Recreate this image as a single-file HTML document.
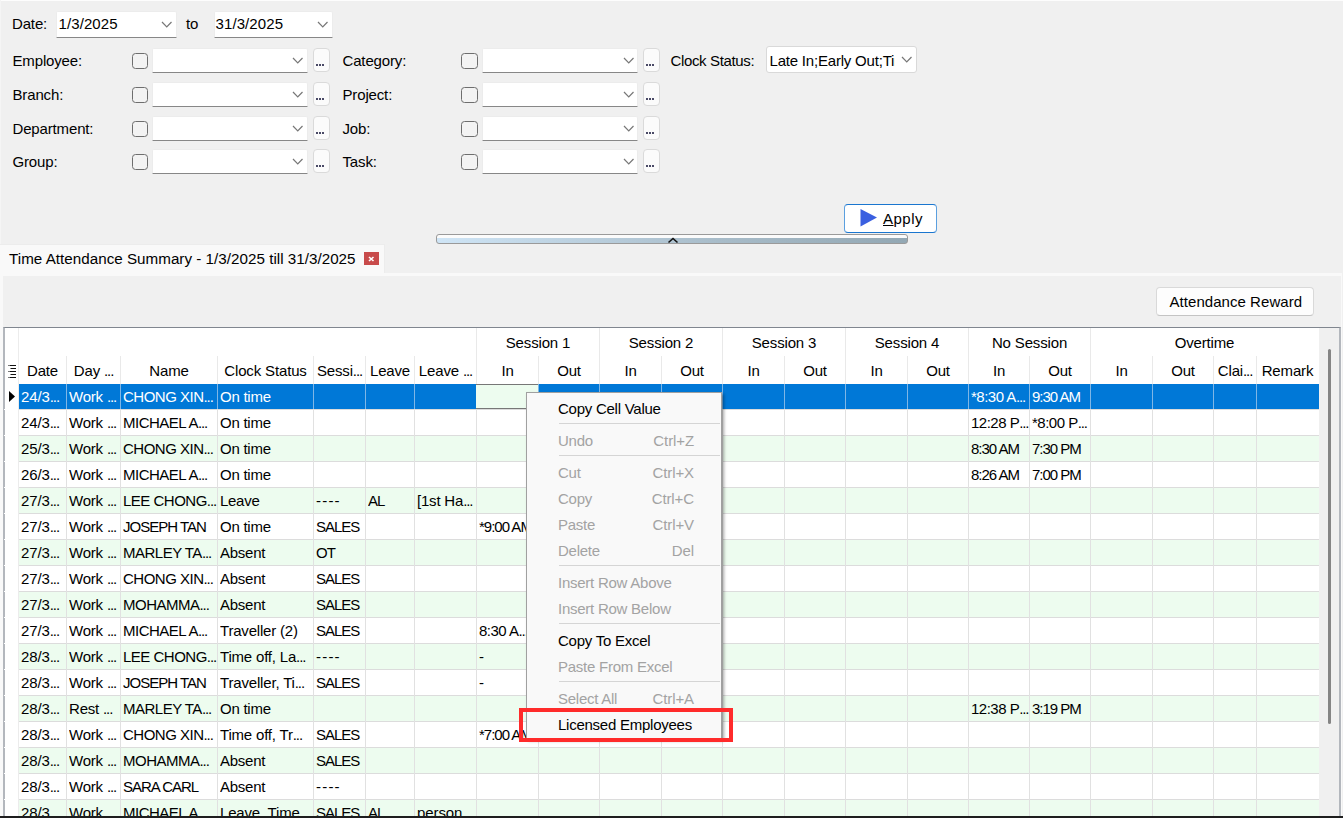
<!DOCTYPE html><html><head><meta charset="utf-8"><style>
*{box-sizing:border-box;margin:0;padding:0}
html,body{width:1343px;height:818px;overflow:hidden;background:#f0f0f0;font-family:"Liberation Sans",sans-serif;font-size:14.5px;color:#000}
.a{position:absolute}
.t{position:absolute;white-space:nowrap;line-height:1}
.cb{position:absolute;width:16.5px;height:16.5px;border:1.3px solid #6e6e6e;border-radius:3.5px;background:#f3f3f3}
.combo{position:absolute;background:#fff;border:1px solid #ececec;border-bottom:1px solid #878787;border-radius:2px 2px 0 0}
.ell{position:absolute;background:#fbfbfb;border:1.3px solid #dadada;border-radius:4px}
.chev{position:absolute}
.g{position:absolute;overflow:hidden;white-space:nowrap;line-height:1}
</style></head><body>
<div class="a" style="left:0;top:0;width:1343px;height:1px;background:#fdfdfd"></div>
<div class="a" style="left:0;top:0;width:1px;height:245px;background:#f5f5f5"></div>
<div class="t" style="left:12px;top:16.30px;font-size:15px;letter-spacing:-0.15px;color:#000;">Date:</div>
<div class="combo" style="left:56px;top:10.5px;width:120.5px;height:27.0px"></div>
<svg class="chev" style="left:160.75px;top:20.5px" width="11.5" height="7"><polyline points="1,1 5.75,6 10.5,1" fill="none" stroke="#777" stroke-width="1.2"/></svg>
<div class="t" style="left:58.5px;top:16.30px;font-size:15px;letter-spacing:0.1px;color:#000;">1/3/2025</div>
<div class="t" style="left:186px;top:16.30px;font-size:15px;letter-spacing:-0.15px;color:#000;">to</div>
<div class="combo" style="left:213.5px;top:10.5px;width:119.0px;height:27.0px"></div>
<svg class="chev" style="left:317.25px;top:20.5px" width="11.5" height="7"><polyline points="1,1 5.75,6 10.5,1" fill="none" stroke="#777" stroke-width="1.2"/></svg>
<div class="t" style="left:215.5px;top:16.30px;font-size:15px;letter-spacing:0.1px;color:#000;">31/3/2025</div>
<div class="t" style="left:12.5px;top:52.60px;font-size:15px;letter-spacing:-0.15px;color:#000;">Employee:</div>
<div class="cb" style="left:131.5px;top:52.5px"></div>
<div class="combo" style="left:152px;top:47.5px;width:155.5px;height:25.5px"></div>
<svg class="chev" style="left:292.25px;top:56.75px" width="11.5" height="7"><polyline points="1,1 5.75,6 10.5,1" fill="none" stroke="#777" stroke-width="1.2"/></svg>
<div class="ell" style="left:312.5px;top:48px;width:17.0px;height:23.5px"></div>
<div class="a" style="left:316.2px;top:64.0px;width:1.5px;height:1.5px;background:#4a4a66"></div>
<div class="a" style="left:319.2px;top:64.0px;width:1.5px;height:1.5px;background:#4a4a66"></div>
<div class="a" style="left:322.2px;top:64.0px;width:1.5px;height:1.5px;background:#4a4a66"></div>
<div class="t" style="left:342.5px;top:52.60px;font-size:15px;letter-spacing:-0.15px;color:#000;">Category:</div>
<div class="cb" style="left:461px;top:52.5px"></div>
<div class="combo" style="left:482px;top:47.5px;width:156px;height:25.5px"></div>
<svg class="chev" style="left:622.75px;top:56.75px" width="11.5" height="7"><polyline points="1,1 5.75,6 10.5,1" fill="none" stroke="#777" stroke-width="1.2"/></svg>
<div class="ell" style="left:642.5px;top:48px;width:17.0px;height:23.5px"></div>
<div class="a" style="left:646.2px;top:64.0px;width:1.5px;height:1.5px;background:#4a4a66"></div>
<div class="a" style="left:649.2px;top:64.0px;width:1.5px;height:1.5px;background:#4a4a66"></div>
<div class="a" style="left:652.2px;top:64.0px;width:1.5px;height:1.5px;background:#4a4a66"></div>
<div class="t" style="left:12.5px;top:86.60px;font-size:15px;letter-spacing:-0.15px;color:#000;">Branch:</div>
<div class="cb" style="left:131.5px;top:86.5px"></div>
<div class="combo" style="left:152px;top:81.5px;width:155.5px;height:25.5px"></div>
<svg class="chev" style="left:292.25px;top:90.75px" width="11.5" height="7"><polyline points="1,1 5.75,6 10.5,1" fill="none" stroke="#777" stroke-width="1.2"/></svg>
<div class="ell" style="left:312.5px;top:82px;width:17.0px;height:23.5px"></div>
<div class="a" style="left:316.2px;top:98.0px;width:1.5px;height:1.5px;background:#4a4a66"></div>
<div class="a" style="left:319.2px;top:98.0px;width:1.5px;height:1.5px;background:#4a4a66"></div>
<div class="a" style="left:322.2px;top:98.0px;width:1.5px;height:1.5px;background:#4a4a66"></div>
<div class="t" style="left:342.5px;top:86.60px;font-size:15px;letter-spacing:-0.15px;color:#000;">Project:</div>
<div class="cb" style="left:461px;top:86.5px"></div>
<div class="combo" style="left:482px;top:81.5px;width:156px;height:25.5px"></div>
<svg class="chev" style="left:622.75px;top:90.75px" width="11.5" height="7"><polyline points="1,1 5.75,6 10.5,1" fill="none" stroke="#777" stroke-width="1.2"/></svg>
<div class="ell" style="left:642.5px;top:82px;width:17.0px;height:23.5px"></div>
<div class="a" style="left:646.2px;top:98.0px;width:1.5px;height:1.5px;background:#4a4a66"></div>
<div class="a" style="left:649.2px;top:98.0px;width:1.5px;height:1.5px;background:#4a4a66"></div>
<div class="a" style="left:652.2px;top:98.0px;width:1.5px;height:1.5px;background:#4a4a66"></div>
<div class="t" style="left:12.5px;top:120.60px;font-size:15px;letter-spacing:-0.15px;color:#000;">Department:</div>
<div class="cb" style="left:131.5px;top:120.5px"></div>
<div class="combo" style="left:152px;top:115.5px;width:155.5px;height:25.5px"></div>
<svg class="chev" style="left:292.25px;top:124.75px" width="11.5" height="7"><polyline points="1,1 5.75,6 10.5,1" fill="none" stroke="#777" stroke-width="1.2"/></svg>
<div class="ell" style="left:312.5px;top:116px;width:17.0px;height:23.5px"></div>
<div class="a" style="left:316.2px;top:132.0px;width:1.5px;height:1.5px;background:#4a4a66"></div>
<div class="a" style="left:319.2px;top:132.0px;width:1.5px;height:1.5px;background:#4a4a66"></div>
<div class="a" style="left:322.2px;top:132.0px;width:1.5px;height:1.5px;background:#4a4a66"></div>
<div class="t" style="left:342.5px;top:120.60px;font-size:15px;letter-spacing:-0.15px;color:#000;">Job:</div>
<div class="cb" style="left:461px;top:120.5px"></div>
<div class="combo" style="left:482px;top:115.5px;width:156px;height:25.5px"></div>
<svg class="chev" style="left:622.75px;top:124.75px" width="11.5" height="7"><polyline points="1,1 5.75,6 10.5,1" fill="none" stroke="#777" stroke-width="1.2"/></svg>
<div class="ell" style="left:642.5px;top:116px;width:17.0px;height:23.5px"></div>
<div class="a" style="left:646.2px;top:132.0px;width:1.5px;height:1.5px;background:#4a4a66"></div>
<div class="a" style="left:649.2px;top:132.0px;width:1.5px;height:1.5px;background:#4a4a66"></div>
<div class="a" style="left:652.2px;top:132.0px;width:1.5px;height:1.5px;background:#4a4a66"></div>
<div class="t" style="left:12.5px;top:153.60px;font-size:15px;letter-spacing:-0.15px;color:#000;">Group:</div>
<div class="cb" style="left:131.5px;top:153.5px"></div>
<div class="combo" style="left:152px;top:148.5px;width:155.5px;height:25.5px"></div>
<svg class="chev" style="left:292.25px;top:157.75px" width="11.5" height="7"><polyline points="1,1 5.75,6 10.5,1" fill="none" stroke="#777" stroke-width="1.2"/></svg>
<div class="ell" style="left:312.5px;top:149px;width:17.0px;height:23.5px"></div>
<div class="a" style="left:316.2px;top:165.0px;width:1.5px;height:1.5px;background:#4a4a66"></div>
<div class="a" style="left:319.2px;top:165.0px;width:1.5px;height:1.5px;background:#4a4a66"></div>
<div class="a" style="left:322.2px;top:165.0px;width:1.5px;height:1.5px;background:#4a4a66"></div>
<div class="t" style="left:342.5px;top:153.60px;font-size:15px;letter-spacing:-0.15px;color:#000;">Task:</div>
<div class="cb" style="left:461px;top:153.5px"></div>
<div class="combo" style="left:482px;top:148.5px;width:156px;height:25.5px"></div>
<svg class="chev" style="left:622.75px;top:157.75px" width="11.5" height="7"><polyline points="1,1 5.75,6 10.5,1" fill="none" stroke="#777" stroke-width="1.2"/></svg>
<div class="ell" style="left:642.5px;top:149px;width:17.0px;height:23.5px"></div>
<div class="a" style="left:646.2px;top:165.0px;width:1.5px;height:1.5px;background:#4a4a66"></div>
<div class="a" style="left:649.2px;top:165.0px;width:1.5px;height:1.5px;background:#4a4a66"></div>
<div class="a" style="left:652.2px;top:165.0px;width:1.5px;height:1.5px;background:#4a4a66"></div>
<div class="t" style="left:670.5px;top:52.50px;font-size:15px;letter-spacing:-0.35px;color:#000;">Clock Status:</div>
<div class="a" style="left:766px;top:45.5px;width:151px;height:27px;background:#fff;border:1px solid #d9d9d9;border-radius:3px"></div>
<div class="a" style="left:769.5px;top:46px;width:125px;height:25px;overflow:hidden">
<div class="t" style="left:0;top:6.50px;font-size:15px;letter-spacing:-0.2px">Late In;Early Out;Time off</div></div>
<svg class="chev" style="left:901.25px;top:55.5px" width="11.5" height="7"><polyline points="1,1 5.75,6 10.5,1" fill="none" stroke="#777" stroke-width="1.2"/></svg>
<div class="a" style="left:844px;top:204px;width:93px;height:29px;background:#fff;border:1.5px solid #1a76cf;border-left-color:#5b9fdf;border-right-color:#5b9fdf;border-radius:4px"></div>
<svg class="a" style="left:859px;top:208px" width="20" height="20"><polygon points="1.5,1 18,9.5 1.5,18.5" fill="#3a5fe0"/></svg>
<div class="t" style="left:883px;top:211.30px;font-size:15px;letter-spacing:0.5px;color:#000;"><u>A</u>pply</div>
<div class="a" style="left:436px;top:234px;width:472px;height:10px;border:1px solid #9a9a9a;border-radius:3px;background:linear-gradient(to bottom,#fbfbfb 0,#fbfbfb 40%,transparent 40%),linear-gradient(to right,#cfe5f6,#a8bcc9 60%,#93a8b4)"></div>
<svg class="a" style="left:667px;top:236.5px" width="12" height="7"><polyline points="1.5,5.5 6,1.5 10.5,5.5" fill="none" stroke="#111" stroke-width="1.6"/></svg>
<div class="a" style="left:0;top:244px;width:385px;height:31px;background:#f9f9f9;border-top:1px solid #ececec;border-right:1px solid #ececec"></div>
<div class="a" style="left:0;top:273px;width:1342px;height:545px;background:#f9f9f9"></div>
<div class="a" style="left:3px;top:276px;width:1338px;height:542px;background:#f0f0f0"></div>
<div class="t" style="left:9px;top:251.13px;font-size:15.2px;letter-spacing:0.02px;color:#000;">Time Attendance Summary - 1/3/2025 till 31/3/2025</div>
<div class="a" style="left:364px;top:251.5px;width:14.5px;height:13.5px;background:#c84b4b"></div>
<svg class="a" style="left:364px;top:251.5px" width="15" height="14"><path d="M5,5 L9.5,9 M9.5,5 L5,9" stroke="#fff" stroke-width="1.6"/></svg>
<div class="a" style="left:1156px;top:287px;width:158px;height:28.5px;background:#fdfdfd;border:1px solid #d9d9d9;border-bottom-color:#c4c4c4;border-radius:4px"></div>
<div class="t" style="left:1169.5px;top:294.30px;font-size:15px;letter-spacing:0.05px;color:#000;">Attendance Reward</div>
<div class="a" style="left:3px;top:327px;width:1338px;height:500px;border-top:1px solid #80868f;border-left:2px solid #b3b7bd;border-right:2px solid #b3b7bd;background:#f0f0f0"></div>
<div class="a" style="left:5px;top:328px;width:1314px;height:490px;background:#fff"></div>
<div class="a" style="left:18px;top:328px;width:1px;height:56px;background:#e9e9e9"></div>
<div class="a" style="left:66px;top:356px;width:1px;height:28px;background:#e9e9e9"></div>
<div class="a" style="left:120px;top:356px;width:1px;height:28px;background:#e9e9e9"></div>
<div class="a" style="left:217px;top:356px;width:1px;height:28px;background:#e9e9e9"></div>
<div class="a" style="left:313px;top:356px;width:1px;height:28px;background:#e9e9e9"></div>
<div class="a" style="left:365px;top:356px;width:1px;height:28px;background:#e9e9e9"></div>
<div class="a" style="left:414px;top:356px;width:1px;height:28px;background:#e9e9e9"></div>
<div class="a" style="left:476px;top:328px;width:1px;height:56px;background:#e9e9e9"></div>
<div class="a" style="left:538px;top:356px;width:1px;height:28px;background:#e9e9e9"></div>
<div class="a" style="left:599px;top:328px;width:1px;height:56px;background:#e9e9e9"></div>
<div class="a" style="left:661px;top:356px;width:1px;height:28px;background:#e9e9e9"></div>
<div class="a" style="left:722px;top:328px;width:1px;height:56px;background:#e9e9e9"></div>
<div class="a" style="left:784px;top:356px;width:1px;height:28px;background:#e9e9e9"></div>
<div class="a" style="left:845px;top:328px;width:1px;height:56px;background:#e9e9e9"></div>
<div class="a" style="left:907px;top:356px;width:1px;height:28px;background:#e9e9e9"></div>
<div class="a" style="left:968px;top:328px;width:1px;height:56px;background:#e9e9e9"></div>
<div class="a" style="left:1029px;top:356px;width:1px;height:28px;background:#e9e9e9"></div>
<div class="a" style="left:1090px;top:328px;width:1px;height:56px;background:#e9e9e9"></div>
<div class="a" style="left:1152px;top:356px;width:1px;height:28px;background:#e9e9e9"></div>
<div class="a" style="left:1213px;top:356px;width:1px;height:28px;background:#e9e9e9"></div>
<div class="a" style="left:1256px;top:356px;width:1px;height:28px;background:#e9e9e9"></div>
<div class="t" style="left:19px;width:47px;text-align:center;top:363.30px;font-size:15px;letter-spacing:-0.15px;color:#000">Date</div>
<div class="t" style="left:67px;width:53px;text-align:center;top:363.30px;font-size:15px;letter-spacing:-0.15px;color:#000">Day <span style="letter-spacing:-1.1px">...</span></div>
<div class="t" style="left:121px;width:96px;text-align:center;top:363.30px;font-size:15px;letter-spacing:-0.15px;color:#000">Name</div>
<div class="t" style="left:218px;width:95px;text-align:center;top:363.30px;font-size:15px;letter-spacing:-0.15px;color:#000">Clock Status</div>
<div class="t" style="left:314px;width:51px;text-align:center;top:363.30px;font-size:15px;letter-spacing:-0.15px;color:#000">Sessi<span style="letter-spacing:-1.1px">...</span></div>
<div class="t" style="left:366px;width:48px;text-align:center;top:363.30px;font-size:15px;letter-spacing:-0.15px;color:#000">Leave</div>
<div class="t" style="left:415px;width:61px;text-align:center;top:363.30px;font-size:15px;letter-spacing:-0.15px;color:#000">Leave <span style="letter-spacing:-1.1px">...</span></div>
<div class="t" style="left:477px;width:61px;text-align:center;top:363.30px;font-size:15px;letter-spacing:-0.15px;color:#000">In</div>
<div class="t" style="left:539px;width:60px;text-align:center;top:363.30px;font-size:15px;letter-spacing:-0.15px;color:#000">Out</div>
<div class="t" style="left:600px;width:61px;text-align:center;top:363.30px;font-size:15px;letter-spacing:-0.15px;color:#000">In</div>
<div class="t" style="left:662px;width:60px;text-align:center;top:363.30px;font-size:15px;letter-spacing:-0.15px;color:#000">Out</div>
<div class="t" style="left:723px;width:61px;text-align:center;top:363.30px;font-size:15px;letter-spacing:-0.15px;color:#000">In</div>
<div class="t" style="left:785px;width:60px;text-align:center;top:363.30px;font-size:15px;letter-spacing:-0.15px;color:#000">Out</div>
<div class="t" style="left:846px;width:61px;text-align:center;top:363.30px;font-size:15px;letter-spacing:-0.15px;color:#000">In</div>
<div class="t" style="left:908px;width:60px;text-align:center;top:363.30px;font-size:15px;letter-spacing:-0.15px;color:#000">Out</div>
<div class="t" style="left:969px;width:60px;text-align:center;top:363.30px;font-size:15px;letter-spacing:-0.15px;color:#000">In</div>
<div class="t" style="left:1030px;width:60px;text-align:center;top:363.30px;font-size:15px;letter-spacing:-0.15px;color:#000">Out</div>
<div class="t" style="left:1091px;width:61px;text-align:center;top:363.30px;font-size:15px;letter-spacing:-0.15px;color:#000">In</div>
<div class="t" style="left:1153px;width:60px;text-align:center;top:363.30px;font-size:15px;letter-spacing:-0.15px;color:#000">Out</div>
<div class="t" style="left:1214px;width:42px;text-align:center;top:363.30px;font-size:15px;letter-spacing:-0.15px;color:#000">Clai<span style="letter-spacing:-1.1px">...</span></div>
<div class="t" style="left:1257px;width:61px;text-align:center;top:363.30px;font-size:15px;letter-spacing:-0.15px;color:#000">Remark</div>
<div class="t" style="left:477px;width:122px;text-align:center;top:335.30px;font-size:15px;letter-spacing:-0.15px;color:#000">Session 1</div>
<div class="t" style="left:600px;width:122px;text-align:center;top:335.30px;font-size:15px;letter-spacing:-0.15px;color:#000">Session 2</div>
<div class="t" style="left:723px;width:122px;text-align:center;top:335.30px;font-size:15px;letter-spacing:-0.15px;color:#000">Session 3</div>
<div class="t" style="left:846px;width:122px;text-align:center;top:335.30px;font-size:15px;letter-spacing:-0.15px;color:#000">Session 4</div>
<div class="t" style="left:969px;width:121px;text-align:center;top:335.30px;font-size:15px;letter-spacing:-0.15px;color:#000">No Session</div>
<div class="t" style="left:1091px;width:227px;text-align:center;top:335.30px;font-size:15px;letter-spacing:-0.15px;color:#000">Overtime</div>
<svg class="a" style="left:7px;top:364px" width="10" height="16"><g stroke="#111" stroke-width="1.1"><path d="M3,1.5h6M3,7.5h6M3,13.5h6M3.5,4.5h5.5M3.5,10.5h5.5" /></g><g stroke="#777" stroke-width="1"><path d="M1,1.5h2M1,7.5h2M1,13.5h2"/></g></svg>
<div class="a" style="left:19px;top:384px;width:1300px;height:25px;background:#0078d7"></div>
<div class="a" style="left:19px;top:409px;width:1300px;height:1px;background:#dcdcdc"></div>
<div class="a" style="left:4px;top:409px;width:14px;height:1px;background:#fff"></div>
<div class="g" style="left:21px;top:384px;width:45px;height:25px;color:#fff;font-size:15px;letter-spacing:-0.10px"><span class="a" style="left:0;top:5.30px">24/3<span style="letter-spacing:-1.1px">...</span></span></div>
<div class="g" style="left:69px;top:384px;width:51px;height:25px;color:#fff;font-size:15px;letter-spacing:-0.20px"><span class="a" style="left:0;top:5.30px">Work <span style="letter-spacing:-1.1px">...</span></span></div>
<div class="g" style="left:123px;top:384px;width:94px;height:25px;color:#fff;font-size:15px;letter-spacing:-0.50px"><span class="a" style="left:0;top:5.30px">CHONG XIN<span style="letter-spacing:-1.1px">...</span></span></div>
<div class="g" style="left:220px;top:384px;width:93px;height:25px;color:#fff;font-size:15px;letter-spacing:-0.25px"><span class="a" style="left:0;top:5.30px">On time</span></div>
<div class="g" style="left:971px;top:384px;width:58px;height:25px;color:#fff;font-size:15px;letter-spacing:-0.50px"><span class="a" style="left:0;top:5.30px">*8:30 A<span style="letter-spacing:-1.1px">...</span></span></div>
<div class="g" style="left:1032px;top:384px;width:58px;height:25px;color:#fff;font-size:15px;letter-spacing:-1.00px"><span class="a" style="left:0;top:5.30px">9:30 AM</span></div>
<div class="a" style="left:19px;top:410px;width:1300px;height:25px;background:#ffffff"></div>
<div class="a" style="left:19px;top:435px;width:1300px;height:1px;background:#dcdcdc"></div>
<div class="a" style="left:4px;top:435px;width:14px;height:1px;background:#fff"></div>
<div class="g" style="left:21px;top:410px;width:45px;height:25px;color:#000;font-size:15px;letter-spacing:-0.10px"><span class="a" style="left:0;top:5.30px">24/3<span style="letter-spacing:-1.1px">...</span></span></div>
<div class="g" style="left:69px;top:410px;width:51px;height:25px;color:#000;font-size:15px;letter-spacing:-0.20px"><span class="a" style="left:0;top:5.30px">Work <span style="letter-spacing:-1.1px">...</span></span></div>
<div class="g" style="left:123px;top:410px;width:94px;height:25px;color:#000;font-size:15px;letter-spacing:-0.50px"><span class="a" style="left:0;top:5.30px">MICHAEL A<span style="letter-spacing:-1.1px">...</span></span></div>
<div class="g" style="left:220px;top:410px;width:93px;height:25px;color:#000;font-size:15px;letter-spacing:-0.25px"><span class="a" style="left:0;top:5.30px">On time</span></div>
<div class="g" style="left:971px;top:410px;width:58px;height:25px;color:#000;font-size:15px;letter-spacing:-0.50px"><span class="a" style="left:0;top:5.30px">12:28 P<span style="letter-spacing:-1.1px">...</span></span></div>
<div class="g" style="left:1032px;top:410px;width:58px;height:25px;color:#000;font-size:15px;letter-spacing:-0.50px"><span class="a" style="left:0;top:5.30px">*8:00 P<span style="letter-spacing:-1.1px">...</span></span></div>
<div class="a" style="left:19px;top:436px;width:1300px;height:25px;background:#edfcef"></div>
<div class="a" style="left:19px;top:461px;width:1300px;height:1px;background:#dcdcdc"></div>
<div class="a" style="left:4px;top:461px;width:14px;height:1px;background:#fff"></div>
<div class="g" style="left:21px;top:436px;width:45px;height:25px;color:#000;font-size:15px;letter-spacing:-0.10px"><span class="a" style="left:0;top:5.30px">25/3<span style="letter-spacing:-1.1px">...</span></span></div>
<div class="g" style="left:69px;top:436px;width:51px;height:25px;color:#000;font-size:15px;letter-spacing:-0.20px"><span class="a" style="left:0;top:5.30px">Work <span style="letter-spacing:-1.1px">...</span></span></div>
<div class="g" style="left:123px;top:436px;width:94px;height:25px;color:#000;font-size:15px;letter-spacing:-0.50px"><span class="a" style="left:0;top:5.30px">CHONG XIN<span style="letter-spacing:-1.1px">...</span></span></div>
<div class="g" style="left:220px;top:436px;width:93px;height:25px;color:#000;font-size:15px;letter-spacing:-0.25px"><span class="a" style="left:0;top:5.30px">On time</span></div>
<div class="g" style="left:971px;top:436px;width:58px;height:25px;color:#000;font-size:15px;letter-spacing:-1.00px"><span class="a" style="left:0;top:5.30px">8:30 AM</span></div>
<div class="g" style="left:1032px;top:436px;width:58px;height:25px;color:#000;font-size:15px;letter-spacing:-1.00px"><span class="a" style="left:0;top:5.30px">7:30 PM</span></div>
<div class="a" style="left:19px;top:462px;width:1300px;height:25px;background:#ffffff"></div>
<div class="a" style="left:19px;top:487px;width:1300px;height:1px;background:#dcdcdc"></div>
<div class="a" style="left:4px;top:487px;width:14px;height:1px;background:#fff"></div>
<div class="g" style="left:21px;top:462px;width:45px;height:25px;color:#000;font-size:15px;letter-spacing:-0.10px"><span class="a" style="left:0;top:5.30px">26/3<span style="letter-spacing:-1.1px">...</span></span></div>
<div class="g" style="left:69px;top:462px;width:51px;height:25px;color:#000;font-size:15px;letter-spacing:-0.20px"><span class="a" style="left:0;top:5.30px">Work <span style="letter-spacing:-1.1px">...</span></span></div>
<div class="g" style="left:123px;top:462px;width:94px;height:25px;color:#000;font-size:15px;letter-spacing:-0.50px"><span class="a" style="left:0;top:5.30px">MICHAEL A<span style="letter-spacing:-1.1px">...</span></span></div>
<div class="g" style="left:220px;top:462px;width:93px;height:25px;color:#000;font-size:15px;letter-spacing:-0.25px"><span class="a" style="left:0;top:5.30px">On time</span></div>
<div class="g" style="left:971px;top:462px;width:58px;height:25px;color:#000;font-size:15px;letter-spacing:-1.00px"><span class="a" style="left:0;top:5.30px">8:26 AM</span></div>
<div class="g" style="left:1032px;top:462px;width:58px;height:25px;color:#000;font-size:15px;letter-spacing:-1.00px"><span class="a" style="left:0;top:5.30px">7:00 PM</span></div>
<div class="a" style="left:19px;top:488px;width:1300px;height:25px;background:#edfcef"></div>
<div class="a" style="left:19px;top:513px;width:1300px;height:1px;background:#dcdcdc"></div>
<div class="a" style="left:4px;top:513px;width:14px;height:1px;background:#fff"></div>
<div class="g" style="left:21px;top:488px;width:45px;height:25px;color:#000;font-size:15px;letter-spacing:-0.10px"><span class="a" style="left:0;top:5.30px">27/3<span style="letter-spacing:-1.1px">...</span></span></div>
<div class="g" style="left:69px;top:488px;width:51px;height:25px;color:#000;font-size:15px;letter-spacing:-0.20px"><span class="a" style="left:0;top:5.30px">Work <span style="letter-spacing:-1.1px">...</span></span></div>
<div class="g" style="left:123px;top:488px;width:94px;height:25px;color:#000;font-size:15px;letter-spacing:-0.50px"><span class="a" style="left:0;top:5.30px">LEE CHONG<span style="letter-spacing:-1.1px">...</span></span></div>
<div class="g" style="left:220px;top:488px;width:93px;height:25px;color:#000;font-size:15px;letter-spacing:-0.28px"><span class="a" style="left:0;top:5.30px">Leave</span></div>
<div class="g" style="left:316px;top:488px;width:49px;height:25px;color:#000;font-size:15px;letter-spacing:-0.10px"><span class="a" style="left:0;top:5.30px"><span style="letter-spacing:1.2px">----</span></span></div>
<div class="g" style="left:368px;top:488px;width:46px;height:25px;color:#000;font-size:15px;letter-spacing:-1.00px"><span class="a" style="left:0;top:5.30px">AL</span></div>
<div class="g" style="left:417px;top:488px;width:59px;height:25px;color:#000;font-size:15px;letter-spacing:-0.20px"><span class="a" style="left:0;top:5.30px">[1st Ha<span style="letter-spacing:-1.1px">...</span></span></div>
<div class="a" style="left:19px;top:514px;width:1300px;height:25px;background:#ffffff"></div>
<div class="a" style="left:19px;top:539px;width:1300px;height:1px;background:#dcdcdc"></div>
<div class="a" style="left:4px;top:539px;width:14px;height:1px;background:#fff"></div>
<div class="g" style="left:21px;top:514px;width:45px;height:25px;color:#000;font-size:15px;letter-spacing:-0.10px"><span class="a" style="left:0;top:5.30px">27/3<span style="letter-spacing:-1.1px">...</span></span></div>
<div class="g" style="left:69px;top:514px;width:51px;height:25px;color:#000;font-size:15px;letter-spacing:-0.20px"><span class="a" style="left:0;top:5.30px">Work <span style="letter-spacing:-1.1px">...</span></span></div>
<div class="g" style="left:123px;top:514px;width:94px;height:25px;color:#000;font-size:15px;letter-spacing:-1.00px"><span class="a" style="left:0;top:5.30px">JOSEPH TAN</span></div>
<div class="g" style="left:220px;top:514px;width:93px;height:25px;color:#000;font-size:15px;letter-spacing:-0.25px"><span class="a" style="left:0;top:5.30px">On time</span></div>
<div class="g" style="left:316px;top:514px;width:49px;height:25px;color:#000;font-size:15px;letter-spacing:-1.00px"><span class="a" style="left:0;top:5.30px">SALES</span></div>
<div class="g" style="left:479px;top:514px;width:59px;height:25px;color:#000;font-size:15px;letter-spacing:-1.00px"><span class="a" style="left:0;top:5.30px">*9:00 AM</span></div>
<div class="a" style="left:19px;top:540px;width:1300px;height:25px;background:#edfcef"></div>
<div class="a" style="left:19px;top:565px;width:1300px;height:1px;background:#dcdcdc"></div>
<div class="a" style="left:4px;top:565px;width:14px;height:1px;background:#fff"></div>
<div class="g" style="left:21px;top:540px;width:45px;height:25px;color:#000;font-size:15px;letter-spacing:-0.10px"><span class="a" style="left:0;top:5.30px">27/3<span style="letter-spacing:-1.1px">...</span></span></div>
<div class="g" style="left:69px;top:540px;width:51px;height:25px;color:#000;font-size:15px;letter-spacing:-0.20px"><span class="a" style="left:0;top:5.30px">Work <span style="letter-spacing:-1.1px">...</span></span></div>
<div class="g" style="left:123px;top:540px;width:94px;height:25px;color:#000;font-size:15px;letter-spacing:-0.50px"><span class="a" style="left:0;top:5.30px">MARLEY TA<span style="letter-spacing:-1.1px">...</span></span></div>
<div class="g" style="left:220px;top:540px;width:93px;height:25px;color:#000;font-size:15px;letter-spacing:-0.25px"><span class="a" style="left:0;top:5.30px">Absent</span></div>
<div class="g" style="left:316px;top:540px;width:49px;height:25px;color:#000;font-size:15px;letter-spacing:-1.00px"><span class="a" style="left:0;top:5.30px">OT</span></div>
<div class="a" style="left:19px;top:566px;width:1300px;height:25px;background:#ffffff"></div>
<div class="a" style="left:19px;top:591px;width:1300px;height:1px;background:#dcdcdc"></div>
<div class="a" style="left:4px;top:591px;width:14px;height:1px;background:#fff"></div>
<div class="g" style="left:21px;top:566px;width:45px;height:25px;color:#000;font-size:15px;letter-spacing:-0.10px"><span class="a" style="left:0;top:5.30px">27/3<span style="letter-spacing:-1.1px">...</span></span></div>
<div class="g" style="left:69px;top:566px;width:51px;height:25px;color:#000;font-size:15px;letter-spacing:-0.20px"><span class="a" style="left:0;top:5.30px">Work <span style="letter-spacing:-1.1px">...</span></span></div>
<div class="g" style="left:123px;top:566px;width:94px;height:25px;color:#000;font-size:15px;letter-spacing:-0.50px"><span class="a" style="left:0;top:5.30px">CHONG XIN<span style="letter-spacing:-1.1px">...</span></span></div>
<div class="g" style="left:220px;top:566px;width:93px;height:25px;color:#000;font-size:15px;letter-spacing:-0.25px"><span class="a" style="left:0;top:5.30px">Absent</span></div>
<div class="g" style="left:316px;top:566px;width:49px;height:25px;color:#000;font-size:15px;letter-spacing:-1.00px"><span class="a" style="left:0;top:5.30px">SALES</span></div>
<div class="a" style="left:19px;top:592px;width:1300px;height:25px;background:#edfcef"></div>
<div class="a" style="left:19px;top:617px;width:1300px;height:1px;background:#dcdcdc"></div>
<div class="a" style="left:4px;top:617px;width:14px;height:1px;background:#fff"></div>
<div class="g" style="left:21px;top:592px;width:45px;height:25px;color:#000;font-size:15px;letter-spacing:-0.10px"><span class="a" style="left:0;top:5.30px">27/3<span style="letter-spacing:-1.1px">...</span></span></div>
<div class="g" style="left:69px;top:592px;width:51px;height:25px;color:#000;font-size:15px;letter-spacing:-0.20px"><span class="a" style="left:0;top:5.30px">Work <span style="letter-spacing:-1.1px">...</span></span></div>
<div class="g" style="left:123px;top:592px;width:94px;height:25px;color:#000;font-size:15px;letter-spacing:-0.50px"><span class="a" style="left:0;top:5.30px">MOHAMMA<span style="letter-spacing:-1.1px">...</span></span></div>
<div class="g" style="left:220px;top:592px;width:93px;height:25px;color:#000;font-size:15px;letter-spacing:-0.25px"><span class="a" style="left:0;top:5.30px">Absent</span></div>
<div class="g" style="left:316px;top:592px;width:49px;height:25px;color:#000;font-size:15px;letter-spacing:-1.00px"><span class="a" style="left:0;top:5.30px">SALES</span></div>
<div class="a" style="left:19px;top:618px;width:1300px;height:25px;background:#ffffff"></div>
<div class="a" style="left:19px;top:643px;width:1300px;height:1px;background:#dcdcdc"></div>
<div class="a" style="left:4px;top:643px;width:14px;height:1px;background:#fff"></div>
<div class="g" style="left:21px;top:618px;width:45px;height:25px;color:#000;font-size:15px;letter-spacing:-0.10px"><span class="a" style="left:0;top:5.30px">27/3<span style="letter-spacing:-1.1px">...</span></span></div>
<div class="g" style="left:69px;top:618px;width:51px;height:25px;color:#000;font-size:15px;letter-spacing:-0.20px"><span class="a" style="left:0;top:5.30px">Work <span style="letter-spacing:-1.1px">...</span></span></div>
<div class="g" style="left:123px;top:618px;width:94px;height:25px;color:#000;font-size:15px;letter-spacing:-0.50px"><span class="a" style="left:0;top:5.30px">MICHAEL A<span style="letter-spacing:-1.1px">...</span></span></div>
<div class="g" style="left:220px;top:618px;width:93px;height:25px;color:#000;font-size:15px;letter-spacing:-0.20px"><span class="a" style="left:0;top:5.30px">Traveller (2)</span></div>
<div class="g" style="left:316px;top:618px;width:49px;height:25px;color:#000;font-size:15px;letter-spacing:-1.00px"><span class="a" style="left:0;top:5.30px">SALES</span></div>
<div class="g" style="left:479px;top:618px;width:59px;height:25px;color:#000;font-size:15px;letter-spacing:-0.50px"><span class="a" style="left:0;top:5.30px">8:30 A<span style="letter-spacing:-1.1px">...</span></span></div>
<div class="a" style="left:19px;top:644px;width:1300px;height:25px;background:#edfcef"></div>
<div class="a" style="left:19px;top:669px;width:1300px;height:1px;background:#dcdcdc"></div>
<div class="a" style="left:4px;top:669px;width:14px;height:1px;background:#fff"></div>
<div class="g" style="left:21px;top:644px;width:45px;height:25px;color:#000;font-size:15px;letter-spacing:-0.10px"><span class="a" style="left:0;top:5.30px">28/3<span style="letter-spacing:-1.1px">...</span></span></div>
<div class="g" style="left:69px;top:644px;width:51px;height:25px;color:#000;font-size:15px;letter-spacing:-0.20px"><span class="a" style="left:0;top:5.30px">Work <span style="letter-spacing:-1.1px">...</span></span></div>
<div class="g" style="left:123px;top:644px;width:94px;height:25px;color:#000;font-size:15px;letter-spacing:-0.50px"><span class="a" style="left:0;top:5.30px">LEE CHONG<span style="letter-spacing:-1.1px">...</span></span></div>
<div class="g" style="left:220px;top:644px;width:93px;height:25px;color:#000;font-size:15px;letter-spacing:-0.19px"><span class="a" style="left:0;top:5.30px">Time off, La<span style="letter-spacing:-1.1px">...</span></span></div>
<div class="g" style="left:316px;top:644px;width:49px;height:25px;color:#000;font-size:15px;letter-spacing:-0.10px"><span class="a" style="left:0;top:5.30px"><span style="letter-spacing:1.2px">----</span></span></div>
<div class="g" style="left:479px;top:644px;width:59px;height:25px;color:#000;font-size:15px;letter-spacing:-0.10px"><span class="a" style="left:0;top:5.30px">-</span></div>
<div class="a" style="left:19px;top:670px;width:1300px;height:25px;background:#ffffff"></div>
<div class="a" style="left:19px;top:695px;width:1300px;height:1px;background:#dcdcdc"></div>
<div class="a" style="left:4px;top:695px;width:14px;height:1px;background:#fff"></div>
<div class="g" style="left:21px;top:670px;width:45px;height:25px;color:#000;font-size:15px;letter-spacing:-0.10px"><span class="a" style="left:0;top:5.30px">28/3<span style="letter-spacing:-1.1px">...</span></span></div>
<div class="g" style="left:69px;top:670px;width:51px;height:25px;color:#000;font-size:15px;letter-spacing:-0.20px"><span class="a" style="left:0;top:5.30px">Work <span style="letter-spacing:-1.1px">...</span></span></div>
<div class="g" style="left:123px;top:670px;width:94px;height:25px;color:#000;font-size:15px;letter-spacing:-1.00px"><span class="a" style="left:0;top:5.30px">JOSEPH TAN</span></div>
<div class="g" style="left:220px;top:670px;width:93px;height:25px;color:#000;font-size:15px;letter-spacing:-0.17px"><span class="a" style="left:0;top:5.30px">Traveller, Ti<span style="letter-spacing:-1.1px">...</span></span></div>
<div class="g" style="left:316px;top:670px;width:49px;height:25px;color:#000;font-size:15px;letter-spacing:-1.00px"><span class="a" style="left:0;top:5.30px">SALES</span></div>
<div class="g" style="left:479px;top:670px;width:59px;height:25px;color:#000;font-size:15px;letter-spacing:-0.10px"><span class="a" style="left:0;top:5.30px">-</span></div>
<div class="a" style="left:19px;top:696px;width:1300px;height:25px;background:#edfcef"></div>
<div class="a" style="left:19px;top:721px;width:1300px;height:1px;background:#dcdcdc"></div>
<div class="a" style="left:4px;top:721px;width:14px;height:1px;background:#fff"></div>
<div class="g" style="left:21px;top:696px;width:45px;height:25px;color:#000;font-size:15px;letter-spacing:-0.10px"><span class="a" style="left:0;top:5.30px">28/3<span style="letter-spacing:-1.1px">...</span></span></div>
<div class="g" style="left:69px;top:696px;width:51px;height:25px;color:#000;font-size:15px;letter-spacing:-0.20px"><span class="a" style="left:0;top:5.30px">Rest <span style="letter-spacing:-1.1px">...</span></span></div>
<div class="g" style="left:123px;top:696px;width:94px;height:25px;color:#000;font-size:15px;letter-spacing:-0.50px"><span class="a" style="left:0;top:5.30px">MARLEY TA<span style="letter-spacing:-1.1px">...</span></span></div>
<div class="g" style="left:220px;top:696px;width:93px;height:25px;color:#000;font-size:15px;letter-spacing:-0.25px"><span class="a" style="left:0;top:5.30px">On time</span></div>
<div class="g" style="left:971px;top:696px;width:58px;height:25px;color:#000;font-size:15px;letter-spacing:-0.50px"><span class="a" style="left:0;top:5.30px">12:38 P<span style="letter-spacing:-1.1px">...</span></span></div>
<div class="g" style="left:1032px;top:696px;width:58px;height:25px;color:#000;font-size:15px;letter-spacing:-1.00px"><span class="a" style="left:0;top:5.30px">3:19 PM</span></div>
<div class="a" style="left:19px;top:722px;width:1300px;height:25px;background:#ffffff"></div>
<div class="a" style="left:19px;top:747px;width:1300px;height:1px;background:#dcdcdc"></div>
<div class="a" style="left:4px;top:747px;width:14px;height:1px;background:#fff"></div>
<div class="g" style="left:21px;top:722px;width:45px;height:25px;color:#000;font-size:15px;letter-spacing:-0.10px"><span class="a" style="left:0;top:5.30px">28/3<span style="letter-spacing:-1.1px">...</span></span></div>
<div class="g" style="left:69px;top:722px;width:51px;height:25px;color:#000;font-size:15px;letter-spacing:-0.20px"><span class="a" style="left:0;top:5.30px">Work <span style="letter-spacing:-1.1px">...</span></span></div>
<div class="g" style="left:123px;top:722px;width:94px;height:25px;color:#000;font-size:15px;letter-spacing:-0.50px"><span class="a" style="left:0;top:5.30px">CHONG XIN<span style="letter-spacing:-1.1px">...</span></span></div>
<div class="g" style="left:220px;top:722px;width:93px;height:25px;color:#000;font-size:15px;letter-spacing:-0.19px"><span class="a" style="left:0;top:5.30px">Time off, Tr<span style="letter-spacing:-1.1px">...</span></span></div>
<div class="g" style="left:316px;top:722px;width:49px;height:25px;color:#000;font-size:15px;letter-spacing:-1.00px"><span class="a" style="left:0;top:5.30px">SALES</span></div>
<div class="g" style="left:479px;top:722px;width:59px;height:25px;color:#000;font-size:15px;letter-spacing:-1.00px"><span class="a" style="left:0;top:5.30px">*7:00 AM</span></div>
<div class="a" style="left:19px;top:748px;width:1300px;height:25px;background:#edfcef"></div>
<div class="a" style="left:19px;top:773px;width:1300px;height:1px;background:#dcdcdc"></div>
<div class="a" style="left:4px;top:773px;width:14px;height:1px;background:#fff"></div>
<div class="g" style="left:21px;top:748px;width:45px;height:25px;color:#000;font-size:15px;letter-spacing:-0.10px"><span class="a" style="left:0;top:5.30px">28/3<span style="letter-spacing:-1.1px">...</span></span></div>
<div class="g" style="left:69px;top:748px;width:51px;height:25px;color:#000;font-size:15px;letter-spacing:-0.20px"><span class="a" style="left:0;top:5.30px">Work <span style="letter-spacing:-1.1px">...</span></span></div>
<div class="g" style="left:123px;top:748px;width:94px;height:25px;color:#000;font-size:15px;letter-spacing:-0.50px"><span class="a" style="left:0;top:5.30px">MOHAMMA<span style="letter-spacing:-1.1px">...</span></span></div>
<div class="g" style="left:220px;top:748px;width:93px;height:25px;color:#000;font-size:15px;letter-spacing:-0.25px"><span class="a" style="left:0;top:5.30px">Absent</span></div>
<div class="g" style="left:316px;top:748px;width:49px;height:25px;color:#000;font-size:15px;letter-spacing:-1.00px"><span class="a" style="left:0;top:5.30px">SALES</span></div>
<div class="a" style="left:19px;top:774px;width:1300px;height:25px;background:#ffffff"></div>
<div class="a" style="left:19px;top:799px;width:1300px;height:1px;background:#dcdcdc"></div>
<div class="a" style="left:4px;top:799px;width:14px;height:1px;background:#fff"></div>
<div class="g" style="left:21px;top:774px;width:45px;height:25px;color:#000;font-size:15px;letter-spacing:-0.10px"><span class="a" style="left:0;top:5.30px">28/3<span style="letter-spacing:-1.1px">...</span></span></div>
<div class="g" style="left:69px;top:774px;width:51px;height:25px;color:#000;font-size:15px;letter-spacing:-0.20px"><span class="a" style="left:0;top:5.30px">Work <span style="letter-spacing:-1.1px">...</span></span></div>
<div class="g" style="left:123px;top:774px;width:94px;height:25px;color:#000;font-size:15px;letter-spacing:-1.00px"><span class="a" style="left:0;top:5.30px">SARA CARL</span></div>
<div class="g" style="left:220px;top:774px;width:93px;height:25px;color:#000;font-size:15px;letter-spacing:-0.25px"><span class="a" style="left:0;top:5.30px">Absent</span></div>
<div class="g" style="left:316px;top:774px;width:49px;height:25px;color:#000;font-size:15px;letter-spacing:-0.10px"><span class="a" style="left:0;top:5.30px"><span style="letter-spacing:1.2px">----</span></span></div>
<div class="a" style="left:19px;top:800px;width:1300px;height:25px;background:#edfcef"></div>
<div class="a" style="left:19px;top:825px;width:1300px;height:1px;background:#dcdcdc"></div>
<div class="a" style="left:4px;top:825px;width:14px;height:1px;background:#fff"></div>
<div class="g" style="left:21px;top:800px;width:45px;height:25px;color:#000;font-size:15px;letter-spacing:-0.10px"><span class="a" style="left:0;top:5.30px">28/3<span style="letter-spacing:-1.1px">...</span></span></div>
<div class="g" style="left:69px;top:800px;width:51px;height:25px;color:#000;font-size:15px;letter-spacing:-0.20px"><span class="a" style="left:0;top:5.30px">Work <span style="letter-spacing:-1.1px">...</span></span></div>
<div class="g" style="left:123px;top:800px;width:94px;height:25px;color:#000;font-size:15px;letter-spacing:-0.50px"><span class="a" style="left:0;top:5.30px">MICHAEL A<span style="letter-spacing:-1.1px">...</span></span></div>
<div class="g" style="left:220px;top:800px;width:93px;height:25px;color:#000;font-size:15px;letter-spacing:-0.19px"><span class="a" style="left:0;top:5.30px">Leave, Time <span style="letter-spacing:-1.1px">...</span></span></div>
<div class="g" style="left:316px;top:800px;width:49px;height:25px;color:#000;font-size:15px;letter-spacing:-1.00px"><span class="a" style="left:0;top:5.30px">SALES</span></div>
<div class="g" style="left:368px;top:800px;width:46px;height:25px;color:#000;font-size:15px;letter-spacing:-1.00px"><span class="a" style="left:0;top:5.30px">AL</span></div>
<div class="g" style="left:417px;top:800px;width:59px;height:25px;color:#000;font-size:15px;letter-spacing:-0.10px"><span class="a" style="left:0;top:5.30px">person<span style="letter-spacing:-1.1px">...</span></span></div>
<div class="a" style="left:66px;top:384px;width:1px;height:434px;background:#e1e1e1"></div>
<div class="a" style="left:120px;top:384px;width:1px;height:434px;background:#e1e1e1"></div>
<div class="a" style="left:217px;top:384px;width:1px;height:434px;background:#e1e1e1"></div>
<div class="a" style="left:313px;top:384px;width:1px;height:434px;background:#e1e1e1"></div>
<div class="a" style="left:365px;top:384px;width:1px;height:434px;background:#e1e1e1"></div>
<div class="a" style="left:414px;top:384px;width:1px;height:434px;background:#e1e1e1"></div>
<div class="a" style="left:476px;top:384px;width:1px;height:434px;background:#e1e1e1"></div>
<div class="a" style="left:538px;top:384px;width:1px;height:434px;background:#e1e1e1"></div>
<div class="a" style="left:599px;top:384px;width:1px;height:434px;background:#e1e1e1"></div>
<div class="a" style="left:661px;top:384px;width:1px;height:434px;background:#e1e1e1"></div>
<div class="a" style="left:722px;top:384px;width:1px;height:434px;background:#e1e1e1"></div>
<div class="a" style="left:784px;top:384px;width:1px;height:434px;background:#e1e1e1"></div>
<div class="a" style="left:845px;top:384px;width:1px;height:434px;background:#e1e1e1"></div>
<div class="a" style="left:907px;top:384px;width:1px;height:434px;background:#e1e1e1"></div>
<div class="a" style="left:968px;top:384px;width:1px;height:434px;background:#e1e1e1"></div>
<div class="a" style="left:1029px;top:384px;width:1px;height:434px;background:#e1e1e1"></div>
<div class="a" style="left:1090px;top:384px;width:1px;height:434px;background:#e1e1e1"></div>
<div class="a" style="left:1152px;top:384px;width:1px;height:434px;background:#e1e1e1"></div>
<div class="a" style="left:1213px;top:384px;width:1px;height:434px;background:#e1e1e1"></div>
<div class="a" style="left:1256px;top:384px;width:1px;height:434px;background:#e1e1e1"></div>
<div class="a" style="left:18px;top:328px;width:1px;height:490px;background:#ececec"></div>
<div class="a" style="left:66px;top:384px;width:1px;height:25px;background:#7fb6e6"></div>
<div class="a" style="left:120px;top:384px;width:1px;height:25px;background:#7fb6e6"></div>
<div class="a" style="left:217px;top:384px;width:1px;height:25px;background:#7fb6e6"></div>
<div class="a" style="left:313px;top:384px;width:1px;height:25px;background:#7fb6e6"></div>
<div class="a" style="left:365px;top:384px;width:1px;height:25px;background:#7fb6e6"></div>
<div class="a" style="left:414px;top:384px;width:1px;height:25px;background:#7fb6e6"></div>
<div class="a" style="left:476px;top:384px;width:1px;height:25px;background:#7fb6e6"></div>
<div class="a" style="left:538px;top:384px;width:1px;height:25px;background:#7fb6e6"></div>
<div class="a" style="left:599px;top:384px;width:1px;height:25px;background:#7fb6e6"></div>
<div class="a" style="left:661px;top:384px;width:1px;height:25px;background:#7fb6e6"></div>
<div class="a" style="left:722px;top:384px;width:1px;height:25px;background:#7fb6e6"></div>
<div class="a" style="left:784px;top:384px;width:1px;height:25px;background:#7fb6e6"></div>
<div class="a" style="left:845px;top:384px;width:1px;height:25px;background:#7fb6e6"></div>
<div class="a" style="left:907px;top:384px;width:1px;height:25px;background:#7fb6e6"></div>
<div class="a" style="left:968px;top:384px;width:1px;height:25px;background:#7fb6e6"></div>
<div class="a" style="left:1029px;top:384px;width:1px;height:25px;background:#7fb6e6"></div>
<div class="a" style="left:1090px;top:384px;width:1px;height:25px;background:#7fb6e6"></div>
<div class="a" style="left:1152px;top:384px;width:1px;height:25px;background:#7fb6e6"></div>
<div class="a" style="left:1213px;top:384px;width:1px;height:25px;background:#7fb6e6"></div>
<div class="a" style="left:1256px;top:384px;width:1px;height:25px;background:#7fb6e6"></div>
<div class="a" style="left:476px;top:384px;width:61.5px;height:25px;background:#edfcef;border-top:1px solid #777;border-bottom:1px solid #777"></div>
<svg class="a" style="left:8px;top:390px" width="8" height="13"><polygon points="1,1 7,6.5 1,12" fill="#000"/></svg>
<div class="a" style="left:1328px;top:349px;width:3px;height:375px;background:#858585;border-radius:2px"></div>
<div class="a" style="left:0;top:816px;width:1343px;height:2px;background:#1e1e1e"></div>
<div class="a" style="left:526px;top:392px;width:196px;height:347px;background:#f9f9f9;border:1px solid #a0a0a0;box-shadow:2px 2px 3px rgba(0,0,0,0.35)"></div>
<div class="t" style="left:558px;top:400.60px;font-size:15px;letter-spacing:-0.25px;color:#000;">Copy Cell Value</div>
<div class="a" style="left:559px;top:423px;width:161px;height:1px;background:#d5d5d5"></div>
<div class="t" style="left:558px;top:433.10px;font-size:15px;letter-spacing:-0.25px;color:#a3a3a3;">Undo</div>
<div class="t" style="left:600px;width:94px;text-align:right;top:433.10px;font-size:15px;letter-spacing:-0.1px;color:#a3a3a3">Ctrl+Z</div>
<div class="a" style="left:559px;top:455px;width:161px;height:1px;background:#d5d5d5"></div>
<div class="t" style="left:558px;top:464.70px;font-size:15px;letter-spacing:-0.25px;color:#a3a3a3;">Cut</div>
<div class="t" style="left:600px;width:94px;text-align:right;top:464.70px;font-size:15px;letter-spacing:-0.1px;color:#a3a3a3">Ctrl+X</div>
<div class="t" style="left:558px;top:490.90px;font-size:15px;letter-spacing:-0.25px;color:#a3a3a3;">Copy</div>
<div class="t" style="left:600px;width:94px;text-align:right;top:490.90px;font-size:15px;letter-spacing:-0.1px;color:#a3a3a3">Ctrl+C</div>
<div class="t" style="left:558px;top:516.60px;font-size:15px;letter-spacing:-0.25px;color:#a3a3a3;">Paste</div>
<div class="t" style="left:600px;width:94px;text-align:right;top:516.60px;font-size:15px;letter-spacing:-0.1px;color:#a3a3a3">Ctrl+V</div>
<div class="t" style="left:558px;top:542.50px;font-size:15px;letter-spacing:-0.25px;color:#a3a3a3;">Delete</div>
<div class="t" style="left:600px;width:94px;text-align:right;top:542.50px;font-size:15px;letter-spacing:-0.1px;color:#a3a3a3">Del</div>
<div class="a" style="left:559px;top:565px;width:161px;height:1px;background:#d5d5d5"></div>
<div class="t" style="left:558px;top:574.50px;font-size:15px;letter-spacing:-0.25px;color:#a3a3a3;">Insert Row Above</div>
<div class="t" style="left:558px;top:601.00px;font-size:15px;letter-spacing:-0.25px;color:#a3a3a3;">Insert Row Below</div>
<div class="a" style="left:559px;top:623px;width:161px;height:1px;background:#d5d5d5"></div>
<div class="t" style="left:558px;top:632.90px;font-size:15px;letter-spacing:-0.25px;color:#000;">Copy To Excel</div>
<div class="t" style="left:558px;top:659.30px;font-size:15px;letter-spacing:-0.25px;color:#a3a3a3;">Paste From Excel</div>
<div class="a" style="left:559px;top:681px;width:161px;height:1px;background:#d5d5d5"></div>
<div class="t" style="left:558px;top:690.60px;font-size:15px;letter-spacing:-0.25px;color:#a3a3a3;">Select All</div>
<div class="t" style="left:600px;width:94px;text-align:right;top:690.60px;font-size:15px;letter-spacing:-0.1px;color:#a3a3a3">Ctrl+A</div>
<div class="t" style="left:558px;top:717.10px;font-size:15px;letter-spacing:-0.25px;color:#000;">Licensed Employees</div>
<div class="a" style="left:519px;top:707.5px;width:214px;height:34px;border:4px solid #ff2b2b"></div>
</body></html>
